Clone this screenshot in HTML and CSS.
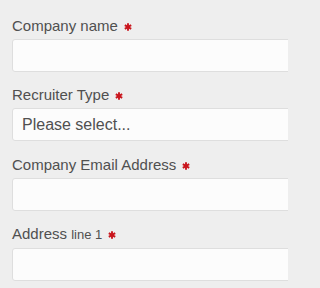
FILE: index.html
```html
<!DOCTYPE html>
<html>
<head>
<meta charset="utf-8">
<link rel="stylesheet" href="styles.css">
</head>
<body>
<div class="frame">
<form class="form">
  <div class="group">
    <label class="label">Company name <svg class="req" viewBox="0 0 8 8"><g stroke="#c9161d" stroke-width="1.9"><line x1="4" y1="0.3" x2="4" y2="7.7"/><line x1="0.8" y1="2.15" x2="7.2" y2="5.85"/><line x1="0.8" y1="5.85" x2="7.2" y2="2.15"/></g></svg></label>
    <div class="input"></div>
  </div>
  <div class="group">
    <label class="label">Recruiter Type <svg class="req" viewBox="0 0 8 8"><g stroke="#c9161d" stroke-width="1.9"><line x1="4" y1="0.3" x2="4" y2="7.7"/><line x1="0.8" y1="2.15" x2="7.2" y2="5.85"/><line x1="0.8" y1="5.85" x2="7.2" y2="2.15"/></g></svg></label>
    <div class="input select">Please select...</div>
  </div>
  <div class="group">
    <label class="label">Company Email Address <svg class="req" viewBox="0 0 8 8"><g stroke="#c9161d" stroke-width="1.9"><line x1="4" y1="0.3" x2="4" y2="7.7"/><line x1="0.8" y1="2.15" x2="7.2" y2="5.85"/><line x1="0.8" y1="5.85" x2="7.2" y2="2.15"/></g></svg></label>
    <div class="input"></div>
  </div>
  <div class="group">
    <label class="label">Address <span class="small">line 1</span> <svg class="req" viewBox="0 0 8 8"><g stroke="#c9161d" stroke-width="1.9"><line x1="4" y1="0.3" x2="4" y2="7.7"/><line x1="0.8" y1="2.15" x2="7.2" y2="5.85"/><line x1="0.8" y1="5.85" x2="7.2" y2="2.15"/></g></svg></label>
    <div class="input"></div>
  </div>
</form>
</div>
</body>
</html>
```
FILE: styles.css
```css
html, body {
  margin: 0;
  padding: 0;
  background: #eeeeee;
  overflow: hidden;
}
body {
  font-family: "Liberation Sans", Arial, sans-serif;
  color: #505050;
}
.frame {
  width: 288px;
  height: 288px;
  overflow: hidden;
}
.form {
  padding: 16px 0 0 12px;
  width: 320px;
}
.group {
  margin-bottom: 13.3px;
}
.label {
  display: block;
  font-size: 15px;
  line-height: 20px;
  margin-bottom: 3px;
  color: #505050;
  white-space: nowrap;
}
.small {
  font-size: 13px;
}
.req {
  width: 8px;
  height: 8px;
  margin-left: 2px;
  vertical-align: 0px;
}
.input {
  box-sizing: border-box;
  width: 300px;
  height: 33px;
  background: #fcfcfc;
  border: 1px solid #dedede;
  border-radius: 3px;
  font-size: 16px;
  line-height: 31px;
  padding-left: 9px;
  color: #505050;
}
```
